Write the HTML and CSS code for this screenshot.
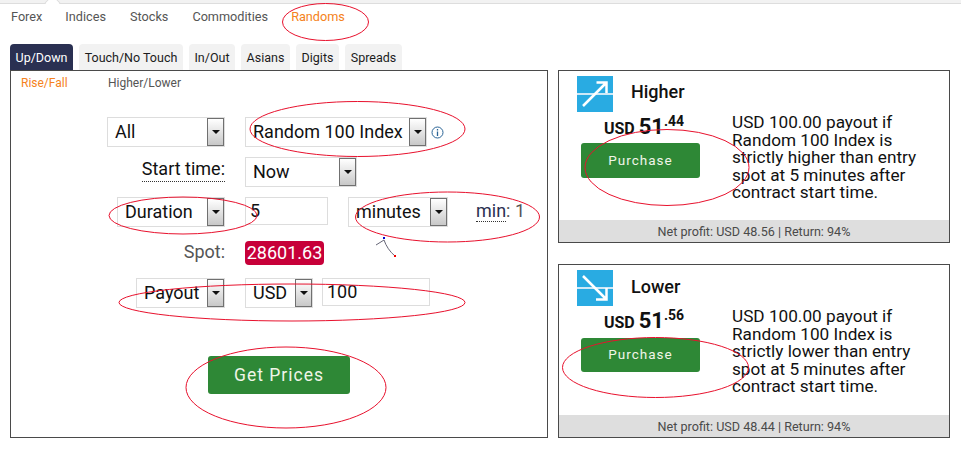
FILE: index.html
```html
<!DOCTYPE html>
<html lang="en">
<head>
<meta charset="utf-8">
<title>Trade</title>
<link rel="stylesheet" href="styles.css">
</head>
<body>
<div class="topline"><i class="notch"></i></div>
<nav class="markets">
  <a class="market">Forex</a>
  <a class="market">Indices</a>
  <a class="market nudge">Stocks</a>
  <a class="market nudge">Commodities</a>
  <a class="market active">Randoms</a>
</nav>
<div class="tabs">
  <div class="tab current t63">Up/Down</div>
  <div class="tab t104">Touch/No Touch</div>
  <div class="tab t46">In/Out</div>
  <div class="tab t49">Asians</div>
  <div class="tab t43">Digits</div>
  <div class="tab t57">Spreads</div>
</div>
<main class="trade">
  <section class="panel">
    <div class="subtabs">
      <span class="subtab active">Rise/Fall</span>
      <span class="subtab">Higher/Lower</span>
    </div>
    <form class="form">
      <div class="cell-l"><div class="sel w118">All<i class="arrow"></i></div></div>
      <div class="cell-r">
        <div class="sel w182">Random 100 Index<i class="arrow"></i></div>
        <svg class="info" width="13" height="13" viewBox="0 0 13 13"><circle cx="6.5" cy="6.5" r="5.5" fill="none" stroke="#2a6496"/><path d="M6.5 3v1.4M6.5 5.6V10" stroke="#2a6496" stroke-width="1.3" fill="none"/></svg>
      </div>

      <div class="cell-l"><span class="lbl dotted">Start time:</span></div>
      <div class="cell-r"><div class="sel w112">Now<i class="arrow"></i></div></div>

      <div class="cell-l"><div class="sel w108">Duration<i class="arrow"></i></div></div>
      <div class="cell-r">
        <div class="inp w83">5</div>
        <div class="sel w100 ml20">minutes<i class="arrow"></i></div>
        <span class="minval"><span class="dotted">min</span>: 1</span>
      </div>

      <div class="cell-l row-spot"><span class="lbl grey">Spot:</span></div>
      <div class="cell-r row-spot"><span class="spot">28601.63</span></div>

      <div class="cell-l"><div class="sel w89">Payout<i class="arrow"></i></div></div>
      <div class="cell-r">
        <div class="sel w68">USD<i class="arrow"></i></div>
        <div class="inp w108 ml9">100</div>
      </div>
    </form>
    <div class="getwrap"><button type="button" class="btn get">Get Prices</button></div>
  </section>
  <div class="cards">
    <article class="card">
      <header class="card-head">
        <svg class="ct-icon" width="36" height="36" viewBox="0 0 36 36"><rect width="36" height="36" fill="#29abe2"/><rect y="17" width="36" height="2" fill="#cfe9f7"/><path d="M6 30L29 7M19.500 6.500H29.500V17" fill="none" stroke="#fff" stroke-width="2.500"/></svg>
        <h2 class="card-title">Higher</h2>
      </header>
      <div class="card-main">
        <div class="buy">
          <div class="price"><span class="cur">USD</span> <span class="big">51</span><sup class="dec">.44</sup></div>
          <button type="button" class="btn purchase">Purchase</button>
        </div>
        <p class="desc">USD 100.00 payout if Random 100 Index is strictly higher than entry spot at 5 minutes after contract start time.</p>
      </div>
      <footer class="card-foot">Net profit: USD 48.56 | Return: 94%</footer>
    </article>
    <article class="card">
      <header class="card-head">
        <svg class="ct-icon" width="36" height="36" viewBox="0 0 36 36"><rect width="36" height="36" fill="#29abe2"/><rect y="17" width="36" height="2" fill="#cfe9f7"/><path d="M6 6L29 29M29.500 18V29.500H19" fill="none" stroke="#fff" stroke-width="2.500"/></svg>
        <h2 class="card-title">Lower</h2>
      </header>
      <div class="card-main">
        <div class="buy">
          <div class="price"><span class="cur">USD</span> <span class="big">51</span><sup class="dec">.56</sup></div>
          <button type="button" class="btn purchase">Purchase</button>
        </div>
        <p class="desc">USD 100.00 payout if Random 100 Index is strictly lower than entry spot at 5 minutes after contract start time.</p>
      </div>
      <footer class="card-foot">Net profit: USD 48.44 | Return: 94%</footer>
    </article>
  </div>
</main>
<svg class="marks" width="961" height="450" viewBox="0 0 961 450">
  <g fill="none" stroke="#e8112d" stroke-width="1">
    <ellipse cx="325.500" cy="22" rx="43" ry="18.500"/>
    <ellipse cx="357.500" cy="129" rx="107.500" ry="27.500"/>
    <ellipse cx="183" cy="215.500" rx="74" ry="18.500"/>
    <ellipse cx="447.500" cy="217" rx="92" ry="25"/>
    <ellipse cx="292" cy="302.500" rx="173" ry="18.500"/>
    <ellipse cx="286" cy="387.500" rx="100" ry="40.500"/>
    <ellipse cx="667" cy="167.500" rx="82" ry="38"/>
    <ellipse cx="655.500" cy="367.500" rx="93" ry="30"/>
  </g>
  <path d="M376 245L384 240C386 246 390 252 395 256" fill="none" stroke="#667" stroke-width="1"/>
  <rect x="383" y="237" width="2" height="2" fill="#00c"/>
  <rect x="394" y="255" width="2" height="2" fill="#e00"/>
</svg>
</body>
</html>
```

FILE: styles.css
```css
* { box-sizing: border-box; }
html, body { margin: 0; padding: 0; }
body {
  width: 961px;
  height: 450px;
  overflow: hidden;
  background: #fff;
  color: #111;
  font-family: Roboto, "Liberation Sans", sans-serif;
  position: relative;
}
.topline { position: relative; height: 4px; background: #f2f2f2; border-bottom: 1px solid #ddd; }
.notch {
  position: absolute;
  left: 47px;
  top: -3px;
  width: 11px;
  height: 11px;
  background: #fff;
  border-left: 1px solid #ddd;
  border-top: 1px solid #ddd;
  transform: rotate(45deg);
}

.markets { display: flex; gap: 23px; height: 40px; padding: 6px 0 0 11px; font-size: 12.700px; line-height: 13px; color: #555; position: relative; }
.market { display: block; }
.nudge { margin-left: 1px; }
.active { color: #f58220; }

.tabs { display: flex; gap: 6px; padding-left: 10px; height: 26px; }
.tab {
  background: #f2f2f2;
  border-radius: 4px 4px 0 0;
  font-size: 12.500px;
  line-height: 27px;
  color: #1c1c1c;
  text-align: center;
  white-space: nowrap;
}
.t63 { width: 63px; }
.t104 { width: 104px; }
.t46 { width: 46px; }
.t49 { width: 49px; }
.t43 { width: 43px; }
.t57 { width: 57px; }
.tab.current { background: #2a3052; color: #fff; }

.trade { display: flex; gap: 10px; padding-left: 10px; }
.panel { width: 538px; height: 368px; border: 1px solid #4a4a4a; }
.subtabs { display: flex; padding: 5px 0 0 10px; font-size: 12px; line-height: 14px; color: #555; height: 46px; }
.subtab { width: 87px; }

.form { display: grid; grid-template-columns: 214px 1fr; column-gap: 20px; }
.cell-l { display: flex; justify-content: flex-end; align-items: flex-start; height: 40px; }
.cell-r { display: flex; align-items: flex-start; height: 40px; }
.row-spot { height: 41px; }

.sel, .inp {
  border: 1px solid #ddd;
  font-size: 18px;
  color: #111;
  background: #fff;
}
.sel {
  position: relative;
  height: 30px;
  line-height: 28px;
  padding-left: 7px;
}
.inp { height: 28px; line-height: 26px; padding-left: 4px; }
.arrow {
  position: absolute;
  top: 0;
  right: 0;
  width: 17px;
  height: 28px;
  border: 1px solid #707070;
  background: linear-gradient(#fff, #c8c8c8);
}
.arrow::after {
  content: "";
  position: absolute;
  left: 4px;
  top: 11px;
  border: 4px solid transparent;
  border-top: 4px solid #111;
  border-bottom: 0;
}
.w118 { width: 118px; }
.w182 { width: 182px; }
.w112 { width: 112px; }
.w108 { width: 108px; }
.w100 { width: 100px; }
.w89 { width: 89px; }
.w68 { width: 68px; }
.w83 { width: 83px; }
.ml20 { margin-left: 20px; }
.ml9 { margin-left: 9px; }

.info { margin: 9px 0 0 4px; }
.lbl { font-size: 18px; line-height: 24px; margin-top: 1px; }
.grey { color: #555; margin-top: 3px; }
.dotted { border-bottom: 1px dotted #333; }
.cell-l .dotted { line-height: 22px; height: 24px; }
.minval { margin: 3px 0 0 28px; font-size: 18px; line-height: 22px; color: #555; }
.minval .dotted { color: #2a3052; }
.spot {
  display: block;
  margin-top: 4px;
  width: 79px;
  height: 24px;
  background: #c70039;
  border-radius: 4px;
  color: #fff;
  font-size: 18px;
  line-height: 24px;
  text-align: center;
}

.btn {
  display: block;
  border: 0;
  background: #2e8836;
  color: #f0f5e8;
  font-family: inherit;
  border-radius: 3px;
  padding: 0;
}
.getwrap { padding: 38px 0 0 197px; }
.get { width: 142px; height: 38px; font-size: 17.500px; letter-spacing: 1px; }

.cards { display: flex; flex-direction: column; gap: 21px; }
.card { width: 392px; height: 173px; border: 1px solid #4a4a4a; display: flex; flex-direction: column; }
.card + .card { height: 174px; }
.card-head { display: flex; align-items: center; gap: 18px; padding: 5px 0 0 18px; height: 41px; }
.ct-icon { display: block; flex: none; }
.card-title { margin: 0 0 4px; font-size: 18px; font-weight: 500; color: #111; }
.card:first-child .card-title { margin-bottom: 6px; }
.card-main { display: flex; flex: 1; }
.buy { width: 173px; padding-left: 22px; }
.price { width: 119px; height: 31px; padding-left: 7px; text-align: center; white-space: nowrap; font-weight: 700; line-height: 30px; }
.cur { font-size: 16px; }
.big { font-size: 22px; font-weight: 700; }
.dec { font-size: 14px; line-height: 0; vertical-align: 8px; }
.purchase { width: 119px; height: 35px; padding-bottom: 2px; font-size: 13.500px; letter-spacing: 1px; }
.card + .card .purchase { height: 34px; margin-top: 1px; }
.desc { margin: 2px 0 0; width: 190px; font-size: 17.200px; line-height: 17.500px; color: #111; }
.card-foot {
  height: 22px;
  background: #dedede;
  color: #4a4a4a;
  font-size: 12.600px;
  line-height: 23px;
  text-align: center;
}

.marks { position: absolute; left: 0; top: 0; pointer-events: none; }
```
